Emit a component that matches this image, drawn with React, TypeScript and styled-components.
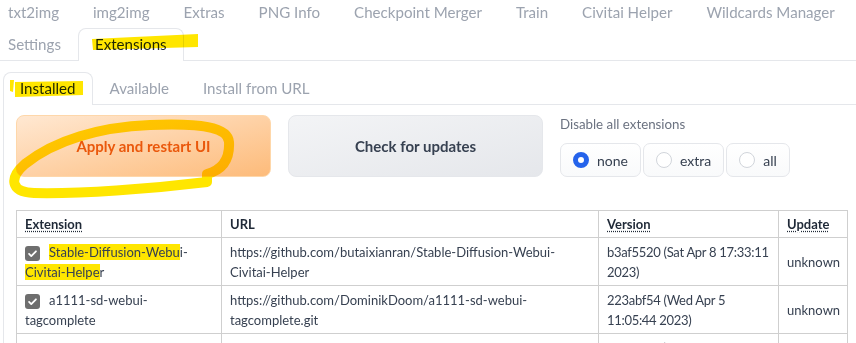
import React from 'react';
import styled, { createGlobalStyle } from 'styled-components';

const GlobalStyle = createGlobalStyle`
  html, body {
    margin: 0;
    padding: 0;
    background: #ffffff;
    overflow: hidden;
  }
  body {
    font-family: 'Lato', 'Liberation Sans', sans-serif;
  }
`;

const Page = styled.div`
  position: relative;
  width: 856px;
  height: 343px;
  overflow: hidden;
`;

const Nav = styled.div`
  display: flex;
  flex-wrap: wrap;
  border-bottom: 1px solid #e5e7eb;
`;

const TopNav = styled(Nav)`
  margin: -4px 0 0 -9px;
  width: 880px;
`;

const RowBreak = styled.div`
  flex-basis: 100%;
  height: 0;
`;

const Tab = styled.div<{ $active?: boolean }>`
  padding: 5px 16px 6px;
  font-size: 15.1px;
  line-height: 20px;
  white-space: nowrap;
  border: 1px solid ${(p) => (p.$active ? '#e5e7eb' : 'transparent')};
  border-bottom: none;
  border-radius: 8px 8px 0 0;
  background: #ffffff;
  color: ${(p) => (p.$active ? '#1f2937' : '#9ca3af')};
  margin-bottom: ${(p) => (p.$active ? '-1px' : '0')};
  padding-bottom: ${(p) => (p.$active ? '7px' : '6px')};
`;

const Outer = styled.div`
  padding-top: 11px;
`;

const InnerGroup = styled.div`
  margin-left: 3px;
`;

const Panel = styled.div`
  border-left: 1px solid #e5e7eb;
  padding: 10px 12px 0;
`;

const ActionRow = styled.div`
  display: grid;
  grid-template-columns: 255px 255px 1fr;
  column-gap: 17px;
  width: 831px;
`;

const BigButton = styled.div<{ $primary?: boolean }>`
  height: 62px;
  box-sizing: border-box;
  display: flex;
  align-items: center;
  justify-content: center;
  border-radius: 8px;
  font-size: 15px;
  font-weight: 700;
  border: 1px solid ${(p) => (p.$primary ? '#fed7aa' : '#e5e7eb')};
  color: ${(p) => (p.$primary ? '#ea580c' : '#374151')};
  background: ${(p) =>
    p.$primary
      ? 'linear-gradient(to bottom right, #ffe8d2, #fdbb7a)'
      : 'linear-gradient(to bottom right, #f3f4f6, #e5e7eb)'};
`;

const RadioBlock = styled.div`
  display: flex;
  flex-direction: column;
`;

const RadioLabel = styled.div`
  font-size: 13.3px;
  line-height: 18px;
  color: #6b7280;
  margin-bottom: 10px;
`;

const RadioList = styled.div`
  display: flex;
  gap: 2px;
`;

const RadioItem = styled.div`
  display: flex;
  align-items: center;
  gap: 8px;
  height: 34px;
  box-sizing: border-box;
  padding: 0 12px;
  border: 1px solid #e5e7eb;
  border-radius: 7px;
  background: linear-gradient(to bottom, #ffffff, #f9fafb);
  font-size: 14px;
  color: #374151;
`;

const Circle = styled.span<{ $checked?: boolean }>`
  width: 16px;
  height: 16px;
  box-sizing: border-box;
  border-radius: 50%;
  background: #ffffff;
  border: ${(p) => (p.$checked ? '5px solid #2563eb' : '1px solid #d1d5db')};
`;

const Table = styled.table`
  margin-top: 33px;
  width: 831px;
  border-collapse: collapse;
  table-layout: fixed;
  font-size: 13px;
  line-height: 20px;
  color: #374151;
`;

const Th = styled.th`
  text-align: left;
  font-weight: 700;
  color: #1f2937;
  padding: 3px 8px 3px;
  border: 1px solid #cfcfcf;
`;

const Abbr = styled.span`
  text-decoration: underline dotted;
  text-underline-offset: 2px;
`;

const Td = styled.td`
  vertical-align: middle;
  padding: 4px 8px 3px;
  border: 1px solid #cfcfcf;
`;

const Line = styled.span`
  display: block;
  white-space: nowrap;
  letter-spacing: -0.3px;
`;

const Check = styled.span`
  display: inline-flex;
  align-items: center;
  justify-content: center;
  width: 15px;
  height: 15px;
  border-radius: 3px;
  background: #6e6e6e;
  vertical-align: -2px;
  margin-right: 9px;
`;

const Mark = styled.span`
  background: #ffe600;
`;

const Overlay = styled.svg`
  position: absolute;
  left: 0;
  top: 0;
  pointer-events: none;
  mix-blend-mode: multiply;
`;

const topTabs = ['txt2img', 'img2img', 'Extras', 'PNG Info', 'Checkpoint Merger', 'Train', 'Civitai Helper', 'Wildcards Manager'];

const rows = [
  {
    name: (
      <>
        <Mark>Stable-Diffusion-Webu</Mark>i-
        <br />
        <Mark>Civitai-Helpe</Mark>r
      </>
    ),
    url: 'https://github.com/butaixianran/Stable-Diffusion-Webui-Civitai-Helper',
    version: ['b3af5520 (Sat Apr 8 17:33:11', '2023)'],
  },
  {
    name: 'a1111-sd-webui-tagcomplete',
    url: 'https://github.com/DominikDoom/a1111-sd-webui-tagcomplete.git',
    version: ['223abf54 (Wed Apr 5', '11:05:44 2023)'],
  },
  {
    name: 'sd-webui-controlnet',
    url: 'https://github.com/Mikubill/sd-webui-controlnet',
    version: ['797fc0a1 (Thu Apr 6', '20:14:52 2023)'],
  },
];

const CheckIcon = () => (
  <svg width="11" height="11" viewBox="0 0 16 16">
    <path d="M3 8.5l3.2 3.2L13 4.8" fill="none" stroke="#ffffff" strokeWidth="2.6" strokeLinecap="round" strokeLinejoin="round" />
  </svg>
);

const App: React.FC = () => {
  return (
    <Page>
      <GlobalStyle />
      <TopNav>
        {topTabs.map((t) => (
          <Tab key={t}>{t}</Tab>
        ))}
        <RowBreak />
        <Tab>Settings</Tab>
        <Tab $active>Extensions</Tab>
      </TopNav>
      <Outer>
        <InnerGroup>
          <Nav>
            <Tab $active>Installed</Tab>
            <Tab>Available</Tab>
            <Tab>Install from URL</Tab>
          </Nav>
          <Panel>
            <ActionRow>
              <BigButton $primary>Apply and restart UI</BigButton>
              <BigButton>Check for updates</BigButton>
              <RadioBlock>
                <RadioLabel>Disable all extensions</RadioLabel>
                <RadioList>
                  <RadioItem>
                    <Circle $checked />
                    none
                  </RadioItem>
                  <RadioItem>
                    <Circle />
                    extra
                  </RadioItem>
                  <RadioItem>
                    <Circle />
                    all
                  </RadioItem>
                </RadioList>
              </RadioBlock>
            </ActionRow>
            <Table>
              <colgroup>
                <col style={{ width: 205 }} />
                <col style={{ width: 377 }} />
                <col style={{ width: 180 }} />
                <col style={{ width: 69 }} />
              </colgroup>
              <thead>
                <tr>
                  <Th>
                    <Abbr>Extension</Abbr>
                  </Th>
                  <Th>URL</Th>
                  <Th>
                    <Abbr>Version</Abbr>
                  </Th>
                  <Th>
                    <Abbr>Update</Abbr>
                  </Th>
                </tr>
              </thead>
              <tbody>
                {rows.map((r) => (
                  <tr key={r.url}>
                    <Td>
                      <Check>
                        <CheckIcon />
                      </Check>
                      {r.name}
                    </Td>
                    <Td>{r.url}</Td>
                    <Td>
                      {r.version.map((l) => (
                        <Line key={l}>{l}</Line>
                      ))}
                    </Td>
                    <Td>unknown</Td>
                  </tr>
                ))}
              </tbody>
            </Table>
          </Panel>
        </InnerGroup>
      </Outer>
      <Overlay width="856" height="343" viewBox="0 0 856 343">
        <polygon points="92,39 198,34 198,47 93,50" fill="#ffe600" />
        <polygon points="15,82 83,81 83,95 15,97" fill="#ffe600" />
        <polygon points="10,80 14,80 13,92 10,91" fill="#ffe600" />
        <path
          d="M207 182 L207 174 C222 170 230 160 229 142 C228 127 200 123 150 125 C100 127 55 140 25 164 C9 178 10 192 34 193 C80 194 150 189 207 182"
          fill="none"
          stroke="#ffe600"
          strokeWidth="10"
          strokeLinecap="round"
          strokeLinejoin="round"
        />
      </Overlay>
    </Page>
  );
};

export default App;
